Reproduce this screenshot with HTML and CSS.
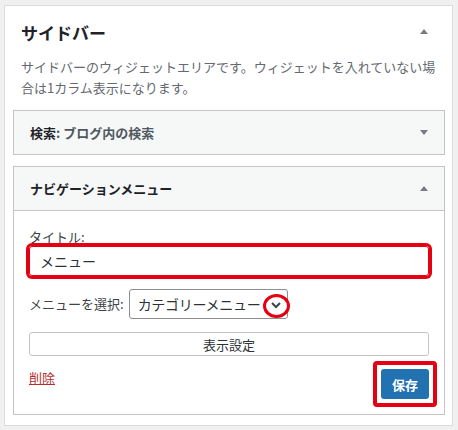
FILE: index.html
```html
<!DOCTYPE html>
<html lang="ja">
<head>
<meta charset="utf-8">
<title>サイドバー</title>
<link rel="stylesheet" href="styles.css">
</head>
<body>
<div class="panel">
  <div class="panel-head">
    <h2 class="panel-title">サイドバー</h2>
    <svg class="tri" width="8" height="5" viewBox="0 0 8 5"><polygon points="0,5 4,0 8,5" fill="#787c82"/></svg>
  </div>
  <p class="desc">サイドバーのウィジェットエリアです。ウィジェットを入れていない場合は1カラム表示になります。</p>

  <div class="widget">
    <div class="widget-top">
      <h3 class="widget-title">検索<span class="in-title">: ブログ内の検索</span></h3>
      <svg class="tri" width="8" height="5" viewBox="0 0 8 5"><polygon points="0,0 8,0 4,5" fill="#787c82"/></svg>
    </div>
  </div>

  <div class="widget open">
    <div class="widget-top">
      <h3 class="widget-title">ナビゲーションメニュー</h3>
      <svg class="tri" width="8" height="5" viewBox="0 0 8 5"><polygon points="0,5 4,0 8,5" fill="#787c82"/></svg>
    </div>
    <div class="widget-inside">
      <label class="field-label">タイトル:</label>
      <div class="text-input">メニュー</div>

      <div class="select-row">
        <span class="field-label">メニューを選択:</span>
        <div class="select">
          <span class="select-text">カテゴリーメニュー</span>
          <svg class="chev" width="10" height="7" viewBox="0 0 10 7"><polyline points="1,1 5,5 9,1" fill="none" stroke="#3c434a" stroke-width="2"/></svg>
          <span class="ring"></span>
        </div>
      </div>

      <div class="btn-secondary">表示設定</div>

      <div class="actions">
        <a class="delete" href="#">削除</a>
        <span class="save-frame"><span class="btn-primary">保存</span></span>
      </div>
    </div>
  </div>
</div>
</body>
</html>
```

FILE: styles.css
```css
* { box-sizing: border-box; }
html, body { margin: 0; padding: 0; }
body {
  background: #f0f0f1;
  font-family: "Noto Sans CJK JP", "Noto Sans", sans-serif;
  color: #3c434a;
  font-size: 13px;
  padding: 5px 0 0 4px;
}
.panel {
  width: 449px;
  height: 421px;
  background: #fff;
  border: 1px solid #dcdcde;
  padding: 15px 7px 0 8px;
}
.panel-head {
  display: flex;
  align-items: center;
  justify-content: space-between;
  padding: 0 17px 0 8px;
  height: 24px;
}
.panel-title {
  margin: 0;
  font-size: 17px;
  font-weight: 700;
  color: #1d2327;
  line-height: 24px;
}
.tri { display: block; margin-top: -3px; }
.desc {
  margin: 11px 4px 12px 8px;
  line-height: 21px;
  color: #646970;
  font-size: 13px;
}
.widget {
  border: 1px solid #c3c4c7;
  background: #f6f7f7;
  margin-bottom: 11px;
}
.widget-top {
  height: 43px;
  display: flex;
  align-items: center;
  justify-content: space-between;
  padding: 0 16px 0 16px;
}
.widget-top .tri { margin-top: 0; }
.widget-title {
  margin: 0;
  font-size: 13px;
  font-weight: 700;
  color: #1d2327;
  line-height: 18px;
}
.in-title { color: #50575e; }
.widget-inside {
  background: #fff;
  border-top: 1px solid #c3c4c7;
  padding: 17px 15px 15px 15px;
}
.field-label {
  display: block;
  line-height: 18px;
  color: #3c434a;
  font-size: 13px;
}
.text-input {
  height: 30px;
  border: 1px solid #e50012;
  box-shadow: 0 0 0 3px #e50012;
  border-radius: 3px;
  padding: 0 10px;
  display: flex;
  align-items: center;
  font-size: 14px;
  color: #2c3338;
}
.select-row {
  margin-top: 13px;
  display: flex;
  align-items: center;
  gap: 5px;
}
.select {
  position: relative;
  width: 159px;
  height: 30px;
  border: 1px solid #8c8f94;
  border-radius: 3px;
  display: flex;
  align-items: center;
  padding-left: 8px;
  font-size: 14px;
  color: #2c3338;
  white-space: nowrap;
}
.select-text { letter-spacing: -0.3px; }
.chev {
  position: absolute;
  left: 141px;
  top: 12px;
}
.ring {
  position: absolute;
  left: 133px;
  top: 4px;
  width: 27px;
  height: 24px;
  border: 3.5px solid #e50012;
  border-radius: 50%;
}
.btn-secondary {
  margin-top: 13px;
  height: 24px;
  border: 1px solid #c3c4c7;
  border-radius: 3px;
  background: #fff;
  display: flex;
  align-items: center;
  justify-content: center;
  color: #2c3338;
  font-size: 13px;
}
.actions {
  margin-top: 13px;
  display: flex;
  justify-content: space-between;
  align-items: flex-start;
}
.delete {
  color: #b32d2e;
  text-decoration: underline;
  line-height: 18px;
  font-size: 13px;
}
.save-frame {
  display: block;
  border: 4px solid #e50012;
  border-radius: 4px;
  padding: 4px;
  margin: -8px -8px -8px 0;
  background: #fff;
}
.btn-primary {
  display: flex;
  align-items: center;
  justify-content: center;
  width: 48px;
  height: 30px;
  background: #2271b1;
  color: #fff;
  font-weight: 700;
  font-size: 13px;
  border-radius: 3px;
}
```
